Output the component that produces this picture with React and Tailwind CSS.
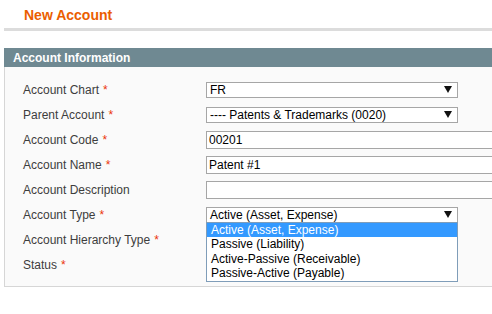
import React from "react";

const font = { fontFamily: '"Liberation Sans", Arial, sans-serif' };

function Arrow() {
  return (
    <svg width="8" height="7" viewBox="0 0 8 7" className="shrink-0">
      <polygon points="0,0 8,0 4,7" fill="#111" />
    </svg>
  );
}

function Select({ value }) {
  return (
    <div className="flex h-[16px] w-[252px] items-center justify-between border border-[#a6a6a6] bg-white pl-[3px] pr-[5px] text-[12px] leading-none text-black">
      <span>{value}</span>
      <Arrow />
    </div>
  );
}

function Input({ value }) {
  return (
    <div className="flex h-[18px] w-[320px] shrink-0 items-center border border-[#a6a6a6] bg-white pl-[2px] text-[12px] leading-none text-black">
      {value}
    </div>
  );
}

function Row({ label, required, children }) {
  return (
    <div className="flex h-[25px] items-center">
      <div className="w-[183px] shrink-0 text-[12px] text-[#3d3d3d]">
        {label}
        {required && <span className="ml-[4px] text-[#eb340a]">*</span>}
      </div>
      {children}
    </div>
  );
}

const types = [
  "Active (Asset, Expense)",
  "Passive (Liability)",
  "Active-Passive (Receivable)",
  "Passive-Active (Payable)",
];

export default function App() {
  return (
    <div className="h-[314px] w-[492px] overflow-hidden bg-white" style={font}>
      <div className="pl-[4px]">
        <div className="flex h-[28px] items-center pl-[20px] pt-[3px] text-[14px] font-bold text-[#eb5e00]">
          New Account
        </div>
        <div className="h-[3px] bg-[#dcdcdc]" />
        <div className="mt-[17px] flex h-[19px] items-center bg-[#6f8992] pl-[9px] text-[12px] font-bold text-white">
          Account Information
        </div>
        <div className="border-b border-l border-[#d6d6d6] bg-[#fafafa] pb-[9px] pl-[18px] pt-[10px]">
          <Row label="Account Chart" required>
            <Select value="FR" />
          </Row>
          <Row label="Parent Account" required>
            <Select value="---- Patents & Trademarks (0020)" />
          </Row>
          <Row label="Account Code" required>
            <Input value="00201" />
          </Row>
          <Row label="Account Name" required>
            <Input value="Patent #1" />
          </Row>
          <Row label="Account Description">
            <Input value="" />
          </Row>
          <Row label="Account Type" required>
            <div className="relative">
              <Select value="Active (Asset, Expense)" />
              <div className="absolute left-0 top-[15px] z-10 w-[252px] border border-[#7f9db9] bg-white text-[12px] leading-none text-black">
                {types.map((t, i) => (
                  <div
                    key={t}
                    className={
                      "flex h-[14.5px] items-center pl-[4px] " +
                      (i === 0 ? "bg-[#3399ff] text-white" : "")
                    }
                  >
                    {t}
                  </div>
                ))}
              </div>
            </div>
          </Row>
          <Row label="Account Hierarchy Type" required />
          <Row label="Status" required />
        </div>
      </div>
    </div>
  );
}
